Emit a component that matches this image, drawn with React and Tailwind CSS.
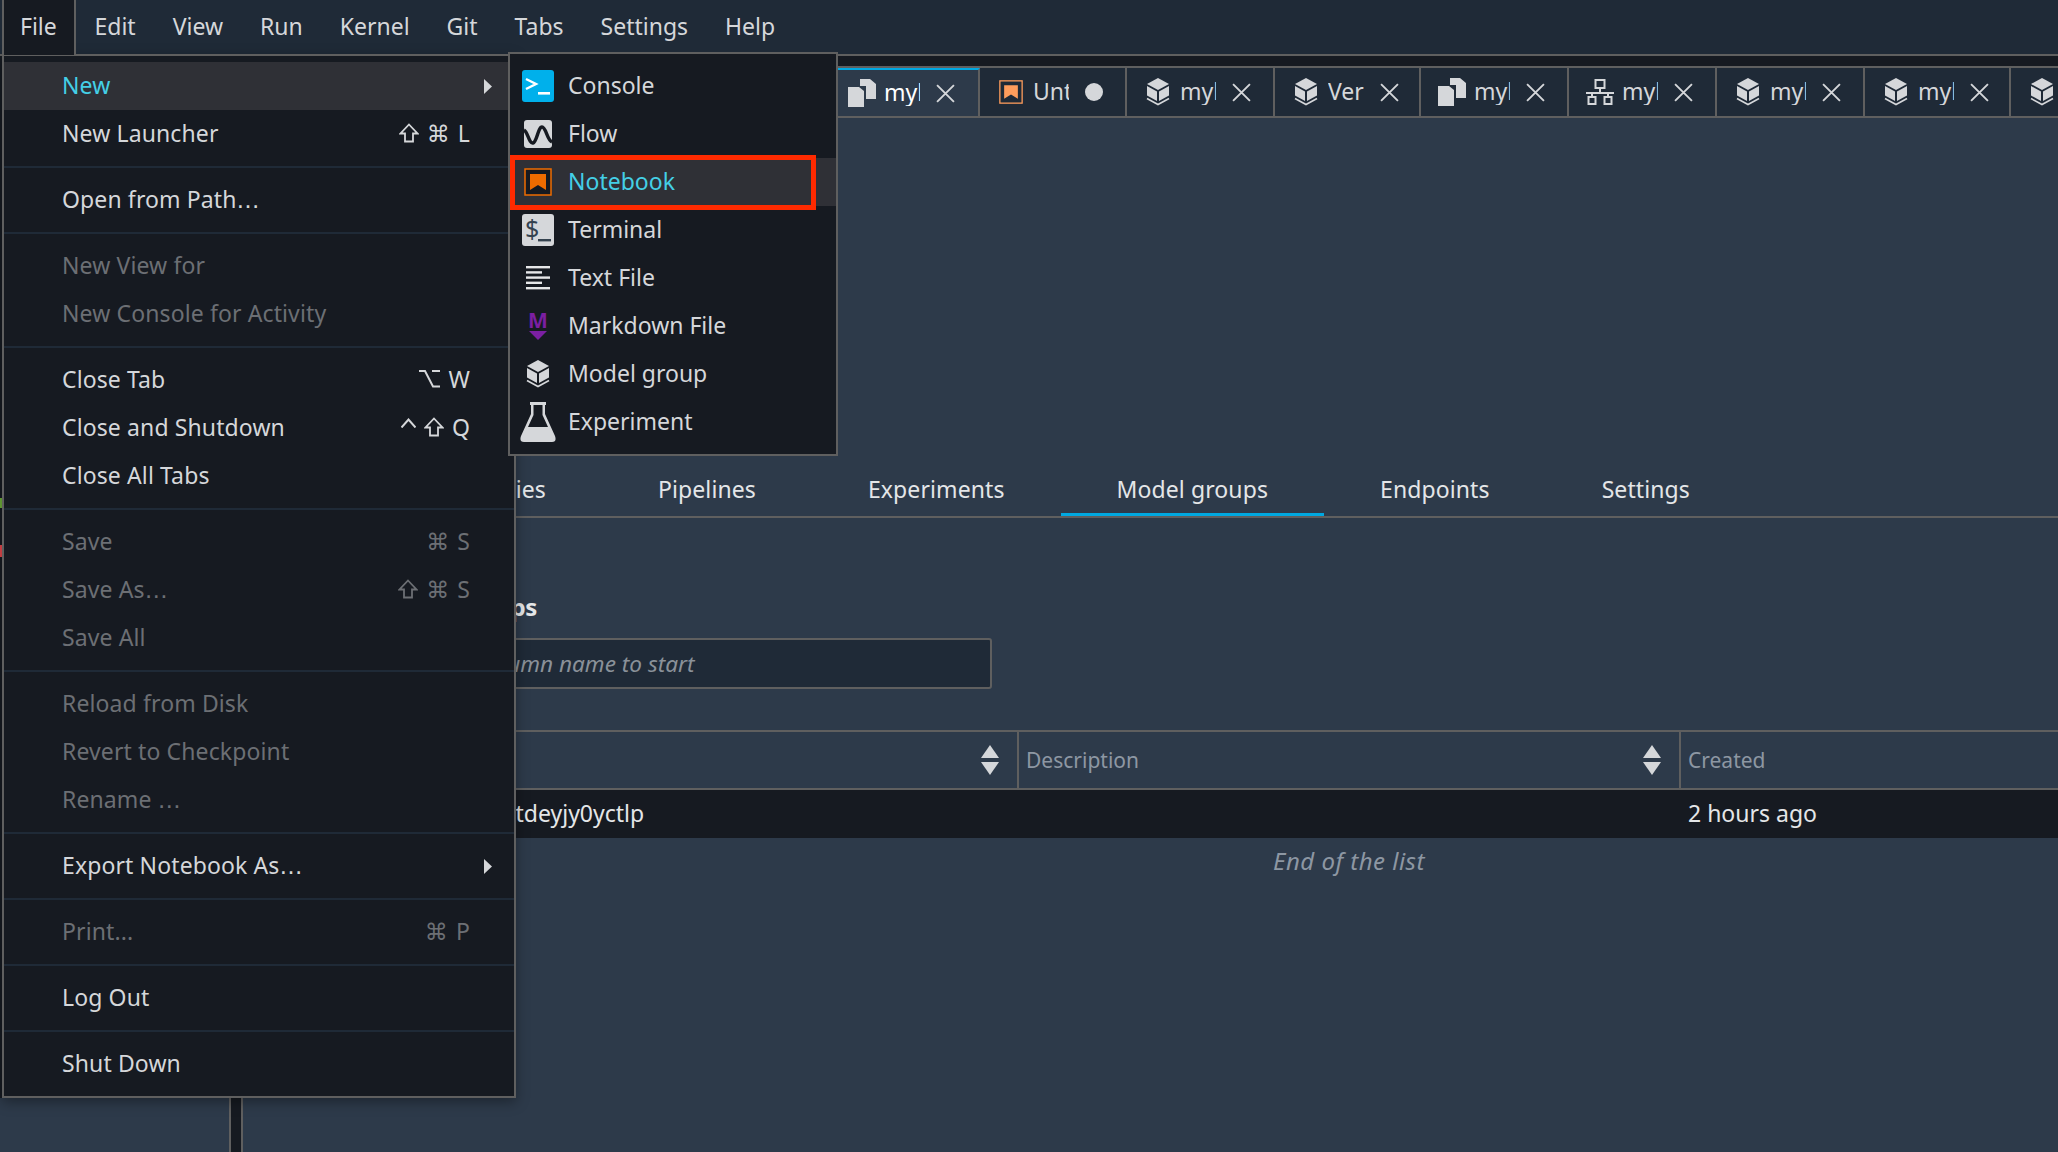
const fontFamily = '"Noto Sans", "DejaVu Sans", sans-serif';

function CubeIcon({ className = "w-6 h-7" }) {
  return (
    <svg viewBox="0 0 24 28" className={className} fill="#d5d7da">
      <polygon points="12,0 23,6 12,12 1,6" />
      <polygon points="1,8 11,13.5 11,23 1,17.5" />
      <polygon points="23,8 13,13.5 13,23 23,17.5" />
      <path d="M1 20.5 L12 26.5 L23 20.5" fill="none" stroke="#d5d7da" strokeWidth="1.6" />
    </svg>
  );
}

function DocsIcon() {
  return (
    <svg viewBox="0 0 28 28" className="w-7 h-7" fill="#d5d7da">
      <polygon points="12,0 22,0 28,5 28,20 18,20 18,7 12,7" />
      <polygon points="0,8 11,8 16,12 16,28 0,28" />
    </svg>
  );
}

function NetworkIcon() {
  return (
    <svg viewBox="0 0 28 28" className="w-7 h-7" fill="none" stroke="#d5d7da" strokeWidth="2">
      <rect x="9.5" y="2" width="9" height="8" />
      <path d="M14 10 V15 M0 15 H28 M6 15 V19 M22 15 V19" />
      <rect x="2.5" y="19" width="7" height="7" />
      <rect x="18.5" y="19" width="7" height="7" />
    </svg>
  );
}

function NotebookIcon({ stroke = "#ef6c00", fill = "#ef6c00", cut = "#161a21", className = "w-7 h-7" }) {
  return (
    <svg viewBox="0 0 28 28" className={className}>
      <rect x="1" y="1" width="26" height="26" fill={cut} stroke={stroke} strokeWidth="1.5" />
      <polygon points="6,6 22,6 22,22 14,17 6,22" fill={fill} />
    </svg>
  );
}

function CloseIcon() {
  return (
    <svg viewBox="0 0 18 18" className="w-[19px] h-[19px] flex-none" fill="none" stroke="#d5d7da" strokeWidth="1.8">
      <path d="M1 1 L17 17 M17 1 L1 17" />
    </svg>
  );
}

function SortIcon() {
  return (
    <svg viewBox="0 0 18 32" className="w-[18px] h-8" fill="#d5d7da">
      <polygon points="9,1 18,14 0,14" />
      <polygon points="0,18 18,18 9,31" />
    </svg>
  );
}

function Arrow() {
  return (
    <svg viewBox="0 0 8 15" className="w-2 h-[15px]" fill="#d5d7da">
      <polygon points="0,0 8,7.5 0,15" />
    </svg>
  );
}

function ShiftKey() {
  return (
    <svg viewBox="0 0 20 20" className="w-5 h-5" fill="none" stroke="currentColor" strokeWidth="1.8">
      <path d="M10 1.5 L18.5 10.5 H14 V18.5 H6 V10.5 H1.5 Z" />
    </svg>
  );
}

function OptionKey() {
  return (
    <svg viewBox="0 0 21 18" className="w-[21px] h-[18px]" fill="none" stroke="currentColor" strokeWidth="2">
      <path d="M0 1 H6 L14 16.5 H21 M13 1 H21" />
    </svg>
  );
}

function CtrlKey() {
  return (
    <svg viewBox="0 0 15 10" className="w-[15px] h-[10px] mb-[8px]" fill="none" stroke="currentColor" strokeWidth="2">
      <path d="M0.5 9.5 L7.5 1.5 L14.5 9.5" />
    </svg>
  );
}

const keyGlyphs = { shift: <ShiftKey />, option: <OptionKey />, ctrl: <CtrlKey /> };

const subIcons = {
  console: (
    <svg viewBox="0 0 32 32" className="w-8 h-8">
      <rect width="32" height="32" rx="3" fill="#00b0eb" />
      <path d="M4 9 L14 14 L4 19" fill="none" stroke="#fff" strokeWidth="2.4" />
      <rect x="16" y="22" width="12" height="2.6" fill="#fff" />
    </svg>
  ),
  flow: (
    <svg viewBox="0 0 28 28" className="w-7 h-7">
      <rect width="28" height="28" rx="3" fill="#d5d7da" />
      <path d="M0 10 C4 12 5 24 9 23 C13 22 14 7 18 7 C22 7 23 20 28 22" fill="none" stroke="#161a21" strokeWidth="3.4" />
    </svg>
  ),
  notebook: <NotebookIcon />,
  terminal: (
    <svg viewBox="0 0 32 32" className="w-8 h-8">
      <rect width="32" height="32" rx="3" fill="#d5d7da" />
      <text x="3" y="24" fontSize="25" fill="#34424f" fontFamily="Noto Sans">$</text>
      <rect x="16" y="25" width="13" height="2.4" fill="#34424f" />
    </svg>
  ),
  text: (
    <svg viewBox="0 0 24 24" className="w-6 h-6" fill="#e6e7e9">
      <rect y="0" width="24" height="2.4" />
      <rect y="5.2" width="16" height="2.4" />
      <rect y="10.4" width="24" height="2.4" />
      <rect y="15.6" width="16" height="2.4" />
      <rect y="21" width="24" height="2.4" />
    </svg>
  ),
  markdown: (
    <svg viewBox="0 0 20 28" className="w-5 h-7">
      <text x="10" y="16" textAnchor="middle" fontSize="21" fontWeight="700" fill="#7b1fa2" fontFamily="Noto Sans">M</text>
      <polygon points="1,19 19,19 10,28" fill="#7b1fa2" />
    </svg>
  ),
  model: <CubeIcon />,
  experiment: (
    <svg viewBox="0 0 36 40" className="w-9 h-10">
      <path d="M10 0 H26 V3 H25 V12 L35 34 Q37 40 32 40 H4 Q-1 40 1 34 L11 12 V3 H10 Z" fill="#d5d7da" />
      <path d="M13.5 3 H22.5 V13 L28 25 H8 L13.5 13 Z" fill="#161a21" />
    </svg>
  ),
};

const subItems = [
  { label: "Console", icon: "console" },
  { label: "Flow", icon: "flow" },
  { label: "Notebook", icon: "notebook", active: true },
  { label: "Terminal", icon: "terminal" },
  { label: "Text File", icon: "text" },
  { label: "Markdown File", icon: "markdown" },
  { label: "Model group", icon: "model" },
  { label: "Experiment", icon: "experiment" },
];

const fileGroups = [
  [{ label: "New", active: true, arrow: true }, { label: "New Launcher", keys: ["shift", "⌘", "L"] }],
  [{ label: "Open from Path", dots: true }],
  [{ label: "New View for", off: true }, { label: "New Console for Activity", off: true }],
  [
    { label: "Close Tab", keys: ["option", "W"] },
    { label: "Close and Shutdown", keys: ["ctrl", "shift", "Q"] },
    { label: "Close All Tabs" },
  ],
  [
    { label: "Save", off: true, keys: ["⌘", "S"] },
    { label: "Save As", dots: true, off: true, keys: ["shift", "⌘", "S"] },
    { label: "Save All", off: true },
  ],
  [
    { label: "Reload from Disk", off: true },
    { label: "Revert to Checkpoint", off: true },
    { label: "Rename ", dots: true, off: true },
  ],
  [{ label: "Export Notebook As", dots: true, arrow: true }],
  [{ label: "Print...", off: true, keys: ["⌘", "P"] }],
  [{ label: "Log Out" }],
  [{ label: "Shut Down" }],
];

const tabs = [
  { label: "myl", icon: <DocsIcon />, active: true },
  { label: "Unt", width: "w-[147px]", icon: <NotebookIcon stroke="#ff9d5c" fill="#ff9d5c" cut="#1f2a37" className="w-6 h-6" />, dirty: true },
  { label: "myl", width: "w-[148px]", icon: <CubeIcon /> },
  { label: "Ver", width: "w-[146px]", icon: <CubeIcon /> },
  { label: "myl", width: "w-[148px]", icon: <DocsIcon /> },
  { label: "myl", width: "w-[148px]", icon: <NetworkIcon /> },
  { label: "myl", width: "w-[148px]", icon: <CubeIcon /> },
  { label: "myl", width: "w-[146px]", icon: <CubeIcon /> },
  { label: "myl", width: "w-[148px]", icon: <CubeIcon /> },
];

const menuBar = ["File", "Edit", "View", "Run", "Kernel", "Git", "Tabs", "Settings", "Help"];

function Tab({ tab }) {
  return (
    <div
      className={`flex-none flex items-center h-full border-r-2 border-[#5f5f5f] ${
        tab.active
          ? "w-[142px] pl-[10px] bg-[#2d3a4a] border-t-2 border-t-[#00a8e1] -mb-[2px] h-[50px]"
          : `${tab.width} pl-[17px] bg-[#1f2a37]`
      }`}
    >
      <div className="w-7 h-7 flex items-center justify-center flex-none">{tab.icon}</div>
      <span className={`ml-[8px] w-[36px] overflow-hidden flex-none pb-[2px] ${tab.active ? "text-white" : "text-[#d5d7da]"}`}>
        {tab.label}
      </span>
      <div className="ml-[16px] flex-none">
        {tab.dirty ? <div className="w-[18px] h-[18px] rounded-full bg-[#d5d7da]" /> : <CloseIcon />}
      </div>
    </div>
  );
}

function FileRow({ item }) {
  let color = "text-[#d5d7da]";
  if (item.off) color = "text-[#6c6f74]";
  if (item.active) color = "text-[#44cfe6]";
  return (
    <div className={`h-12 flex items-center pl-[58px] tracking-[0.005em] ${item.active ? "bg-[#2f3036]" : ""} ${color}`}>
      <span className={`flex-1 whitespace-pre ${item.dots ? "" : "pb-[2px]"}`}>
        {item.label}
        {item.dots && <span className="font-['DejaVu_Sans']">…</span>}
      </span>
      {item.keys && (
        <span className="flex items-center gap-[8px] pr-[44px] pb-[2px]">
          {item.keys.map((k) => (
            <span key={k} className="flex items-center">
              {keyGlyphs[k] || k}
            </span>
          ))}
        </span>
      )}
      {item.arrow && (
        <span className="pr-[22px] flex items-center">
          <Arrow />
        </span>
      )}
    </div>
  );
}

export default function App() {
  return (
    <div
      className="relative w-[2058px] h-[1152px] overflow-hidden flex flex-col bg-[#2d3a4a] text-[#d5d7da] text-[23px] leading-none"
      style={{ fontFamily }}
    >
      {/* top menu bar */}
      <div className="h-[56px] flex-none flex items-center pl-[2px] bg-[#1f2a37] border-b-2 border-[#5f5f5f]">
        {menuBar.map((m) => (
          <div
            key={m}
            className={`h-[56px] flex items-center pb-[2px] ${
              m === "File"
                ? "bg-[#161a21] border-x-2 border-[#5f5f5f] relative z-20 w-[74px] pl-[16px]"
                : "px-[18.5px]"
            }`}
          >
            {m}
          </div>
        ))}
      </div>

      <div className="flex-1 flex min-h-0">
        <div className="w-[229px] flex-none" />
        <div className="w-[14px] flex-none bg-[#161a21] border-x-2 border-[#5f5f5f]" />

        {/* main area */}
        <div className="flex-1 min-w-0 flex flex-col">
          <div className="h-[10px] flex-none bg-[#161a21]" />
          <div className="h-[52px] flex-none flex border-y-2 border-[#5f5f5f] bg-[#1f2a37]">
            <div className="w-[595px] flex-none" />
            {tabs.map((t, i) => (
              <Tab key={i} tab={t} />
            ))}
          </div>

          <div className="mt-[344px] h-[56px] flex-none flex items-stretch border-b-2 border-[#5f5f5f] text-[#e4e6e8] tracking-[0.1px]">
            <div className="w-[359px] flex-none pr-14 pt-[3px] flex items-center justify-end border-b-[3px] border-transparent">Repositories</div>
            {["Pipelines", "Experiments", "Model groups", "Endpoints", "Settings"].map((t) => (
              <div
                key={t}
                className={`flex-none px-14 pt-[3px] flex items-center border-b-[3px] ${
                  t === "Model groups" ? "border-[#00a8e1]" : "border-transparent"
                }`}
              >
                {t}
              </div>
            ))}
          </div>

          <div className="pl-[135px] flex flex-col">
            <h2 className="mt-[77px] text-[24px] font-bold text-[#e4e6e8] tracking-[-0.4px]">Model groups</h2>
            <input
              readOnly
              placeholder="Type a column name to start"
              className="mt-[19px] w-[614px] h-[51px] pl-[28px] bg-[#1f2a37] border-2 border-[#5f5f5f] rounded-[3px] italic text-[22.6px] placeholder:text-[#8a9199]"
            />

            <div className="mt-[41px] w-[1942px] flex-none">
              <div className="h-[60px] flex border-y-2 border-[#5f5f5f] text-[#8d97a3] text-[21px]">
                <div className="w-[639px] flex items-center justify-end pr-[18px]">
                  <SortIcon />
                </div>
                <div className="w-[662px] border-l-2 border-[#5f5f5f] flex items-center justify-between pl-[7px] pr-[18px]">
                  <span>Description</span>
                  <SortIcon />
                </div>
                <div className="flex-1 border-l-2 border-[#5f5f5f] flex items-center pl-[7px]">Created</div>
              </div>
              <div className="h-12 flex items-center bg-[#161a21] text-[#e4e6e8]">
                <div className="w-[639px] pl-[21px] pb-[2px]">my-model-tdeyjy0yctlp</div>
                <div className="w-[662px]" />
                <div className="pl-[9px] pb-[2px]">2 hours ago</div>
              </div>
              <div className="h-[46px] flex items-center justify-center italic text-[#8d97a3] text-[24px] tracking-[0.02em]">End of the list</div>
            </div>
          </div>
        </div>
      </div>

      {/* File menu */}
      <div className="absolute left-[2px] top-[54px] w-[514px] h-[1044px] z-10 bg-[#161a21] border-2 border-[#5f5f5f] py-[6px] shadow-[0_4px_12px_rgba(0,0,0,0.35)]">
        {fileGroups.map((group, i) => (
          <div key={i}>
            {i > 0 && <div className="h-[2px] my-2 bg-[#1f2a37]" />}
            {group.map((item) => (
              <FileRow key={item.label} item={item} />
            ))}
          </div>
        ))}
      </div>

      {/* New submenu */}
      <div className="absolute left-[508px] top-[52px] w-[330px] z-30 bg-[#161a21] border-2 border-[#5f5f5f] py-2">
        {subItems.map((item) => (
          <div
            key={item.label}
            className={`h-12 flex items-center ${item.active ? "bg-[#2f3036] text-[#44cfe6]" : ""}`}
          >
            <div className="w-[54px] pl-[1px] flex-none flex items-center justify-center">{subIcons[item.icon]}</div>
            <span className="ml-[4px] pb-[2px]">{item.label}</span>
          </div>
        ))}
        {/* red annotation around Notebook */}
        <div className="absolute left-0 top-[101px] w-[306px] h-[55px] border-[5px] border-[#ff2a00]" />
      </div>

      {/* tiny bits of the hidden sidebar at the far left */}
      <div className="absolute left-0 top-[56px] h-[1042px] w-[2px] bg-[#161a21]" />
      <div className="absolute left-0 top-[498px] h-[10px] w-[2px] bg-[#6fae3a]" />
      <div className="absolute left-0 top-[545px] h-[12px] w-[2px] bg-[#e5484d]" />
    </div>
  );
}
